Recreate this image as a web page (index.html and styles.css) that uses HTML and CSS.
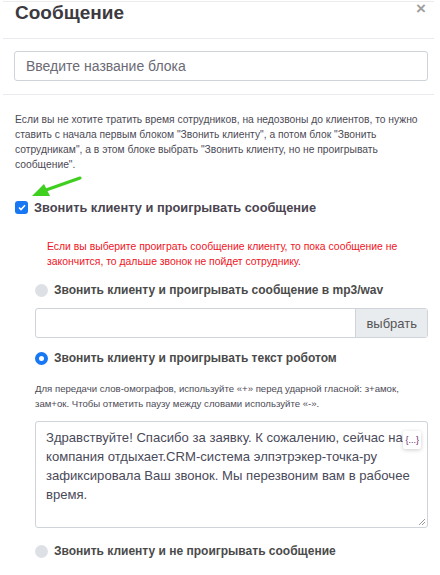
FILE: index.html
```html
<!DOCTYPE html>
<html lang="ru">
<head>
    <meta charset="UTF-8">
    <title>Сообщение</title>
    <link rel="stylesheet" href="styles.css">
</head>
<body>
    <div class="modal">
        <div class="modal-head">
            <h2 class="modal-title">Сообщение</h2>
            <span class="close">×</span>
        </div>
        <div class="name-block">
            <input class="field" type="text" placeholder="Введите название блока">
        </div>
        <div class="modal-body">
            <p class="info">Если вы не хотите тратить время сотрудников, на недозвоны до клиентов, то нужно ставить с начала первым блоком "Звонить клиенту", а потом блок "Звонить сотрудникам", а в этом блоке выбрать "Звонить клиенту, но не проигрывать сообщение".</p>

            <svg class="arrow" width="70" height="24" viewBox="0 0 70 24">
                <line x1="61" y1="3" x2="27" y2="15" stroke="#3fcf1f" stroke-width="3" stroke-linecap="round"/>
                <polygon points="13,21 25,9 31,21" fill="#3fcf1f"/>
            </svg>

            <label class="check-row">
                <span class="checkbox">
                    <svg width="8" height="7" viewBox="0 0 8 7"><path d="M1 3.5 L3 5.5 L7 1.2" fill="none" stroke="#fff" stroke-width="1.6"/></svg>
                </span>
                <span class="check-label">Звонить клиенту и проигрывать сообщение</span>
            </label>

            <div class="options">
                <p class="warn">Если вы выберите проиграть сообщение клиенту, то пока сообщение не закончится, то дальше звонок не пойдет сотруднику.</p>
            </div>

            <div class="variants">
                <div class="radio-row first">
                    <span class="radio"></span>
                    <span class="radio-label">Звонить клиенту и проигрывать сообщение в mp3/wav</span>
                </div>
                <div class="file-group">
                    <div class="file-name"></div>
                    <div class="file-btn">выбрать</div>
                </div>

                <div class="radio-row">
                    <span class="radio checked"></span>
                    <span class="radio-label">Звонить клиенту и проигрывать текст роботом</span>
                </div>
                <p class="hint">Для передачи слов-омографов, используйте «+» перед ударной гласной: з+амок, зам+ок. Чтобы отметить паузу между словами используйте «-».</p>
                <div class="text-wrap">
                    <div class="textarea">Здравствуйте! Спасибо за заявку. К сожалению, сейчас наша компания отдыхает.CRM-система элпэтрэкер-точка-ру зафиксировала Ваш звонок. Мы перезвоним вам в рабочее время.</div>
                    <span class="vars">{...}</span>
                    <svg class="grip" width="8" height="8" viewBox="0 0 8 8"><path d="M7 1 L1 7 M7 4 L4 7" stroke="#999" stroke-width="1"/></svg>
                </div>

                <div class="radio-row last">
                    <span class="radio"></span>
                    <span class="radio-label">Звонить клиенту и не проигрывать сообщение</span>
                </div>
            </div>
        </div>
    </div>
</body>
</html>
```

FILE: styles.css
```css
body{
    margin: 0;
    background: #fff;
    font-family: "Liberation Sans", Arial, sans-serif;
    color: #444;
}
.modal{
    width: 431px;
    margin: 1px 0 0 3px;
    border-top: 1px solid #ececec;
}
.modal-head{
    display: flex;
    justify-content: space-between;
    align-items: flex-start;
    height: 36px;
    padding: 0 8px 0 12px;
    border-bottom: 1px solid #e9e9ee;
}
.modal-title{
    margin: 0;
    font-size: 19px;
    line-height: 22px;
    font-weight: bold;
    color: #3d3a3f;
}
.close{
    font-size: 17px;
    line-height: 13px;
    font-weight: bold;
    color: #a0a0a0;
}
.name-block{
    padding: 12px 6px 13px 11px;
    border-bottom: 1px solid #e9e9ee;
}
.field{
    display: block;
    box-sizing: border-box;
    width: 100%;
    height: 30px;
    margin: 0;
    padding: 0 11px;
    border: 1px solid #cfd3da;
    border-radius: 3px;
    font-family: inherit;
    font-size: 14px;
    color: #555;
}
.field::placeholder{
    color: #6b6a75;
}
.modal-body{
    padding: 0 6px 0 12px;
}
.info{
    margin: 0;
    padding-top: 17px;
    font-size: 10.3px;
    line-height: 15px;
    color: #4c4a55;
}
.arrow{
    display: block;
    margin: 3px 0 0 4px;
}
.check-row{
    display: flex;
    align-items: center;
    gap: 6px;
    height: 16px;
}
.checkbox{
    display: flex;
    align-items: center;
    justify-content: center;
    width: 13px;
    height: 13px;
    border-radius: 3px;
    background: #1877f2;
}
.check-label{
    font-size: 12.8px;
    font-weight: bold;
    color: #4a4550;
}
.options{
    padding-left: 32px;
}
.warn{
    margin: 0;
    padding-top: 24px;
    font-size: 10.4px;
    line-height: 15px;
    color: #f0141e;
}
.variants{
    padding-left: 20px;
}
.radio-row{
    display: flex;
    align-items: center;
    gap: 6px;
    height: 16px;
    margin-top: 12px;
}
.radio-row.first{
    margin-top: 13px;
}
.radio{
    box-sizing: border-box;
    width: 13px;
    height: 13px;
    border-radius: 50%;
    background: #dde1e6;
}
.radio.checked{
    background: #fff;
    border: 4px solid #1877f2;
}
.radio-label{
    font-size: 12px;
    font-weight: bold;
    color: #4a4a4a;
}
.file-group{
    display: flex;
    height: 30px;
    margin-top: 10px;
    border: 1px solid #cfd3da;
    border-radius: 3px;
    box-sizing: border-box;
}
.file-name{
    flex: 1;
}
.file-btn{
    display: flex;
    align-items: center;
    padding: 0 10px;
    border-left: 1px solid #cfd3da;
    background: #e9ecef;
    font-size: 13px;
    color: #555;
}
.hint{
    margin: 15px 0 0 0;
    font-size: 9.6px;
    line-height: 15px;
    color: #4c4a55;
}
.text-wrap{
    position: relative;
    margin-top: 10px;
}
.textarea{
    box-sizing: border-box;
    height: 107px;
    padding: 6px 0 6px 10px;
    border: 1px solid #cfd3da;
    border-radius: 3px;
    font-size: 13.1px;
    line-height: 19px;
    color: #4a4a5a;
}
.vars{
    position: absolute;
    top: 10px;
    right: 7px;
    padding: 4px 2px;
    background: #fff;
    box-shadow: 0 1px 4px rgba(0,0,0,0.2);
    border-radius: 2px;
    font-size: 9px;
    color: #6a2a6a;
}
.grip{
    position: absolute;
    right: 2px;
    bottom: 2px;
}
.radio-row.last{
    margin-top: 15px;
}
```
